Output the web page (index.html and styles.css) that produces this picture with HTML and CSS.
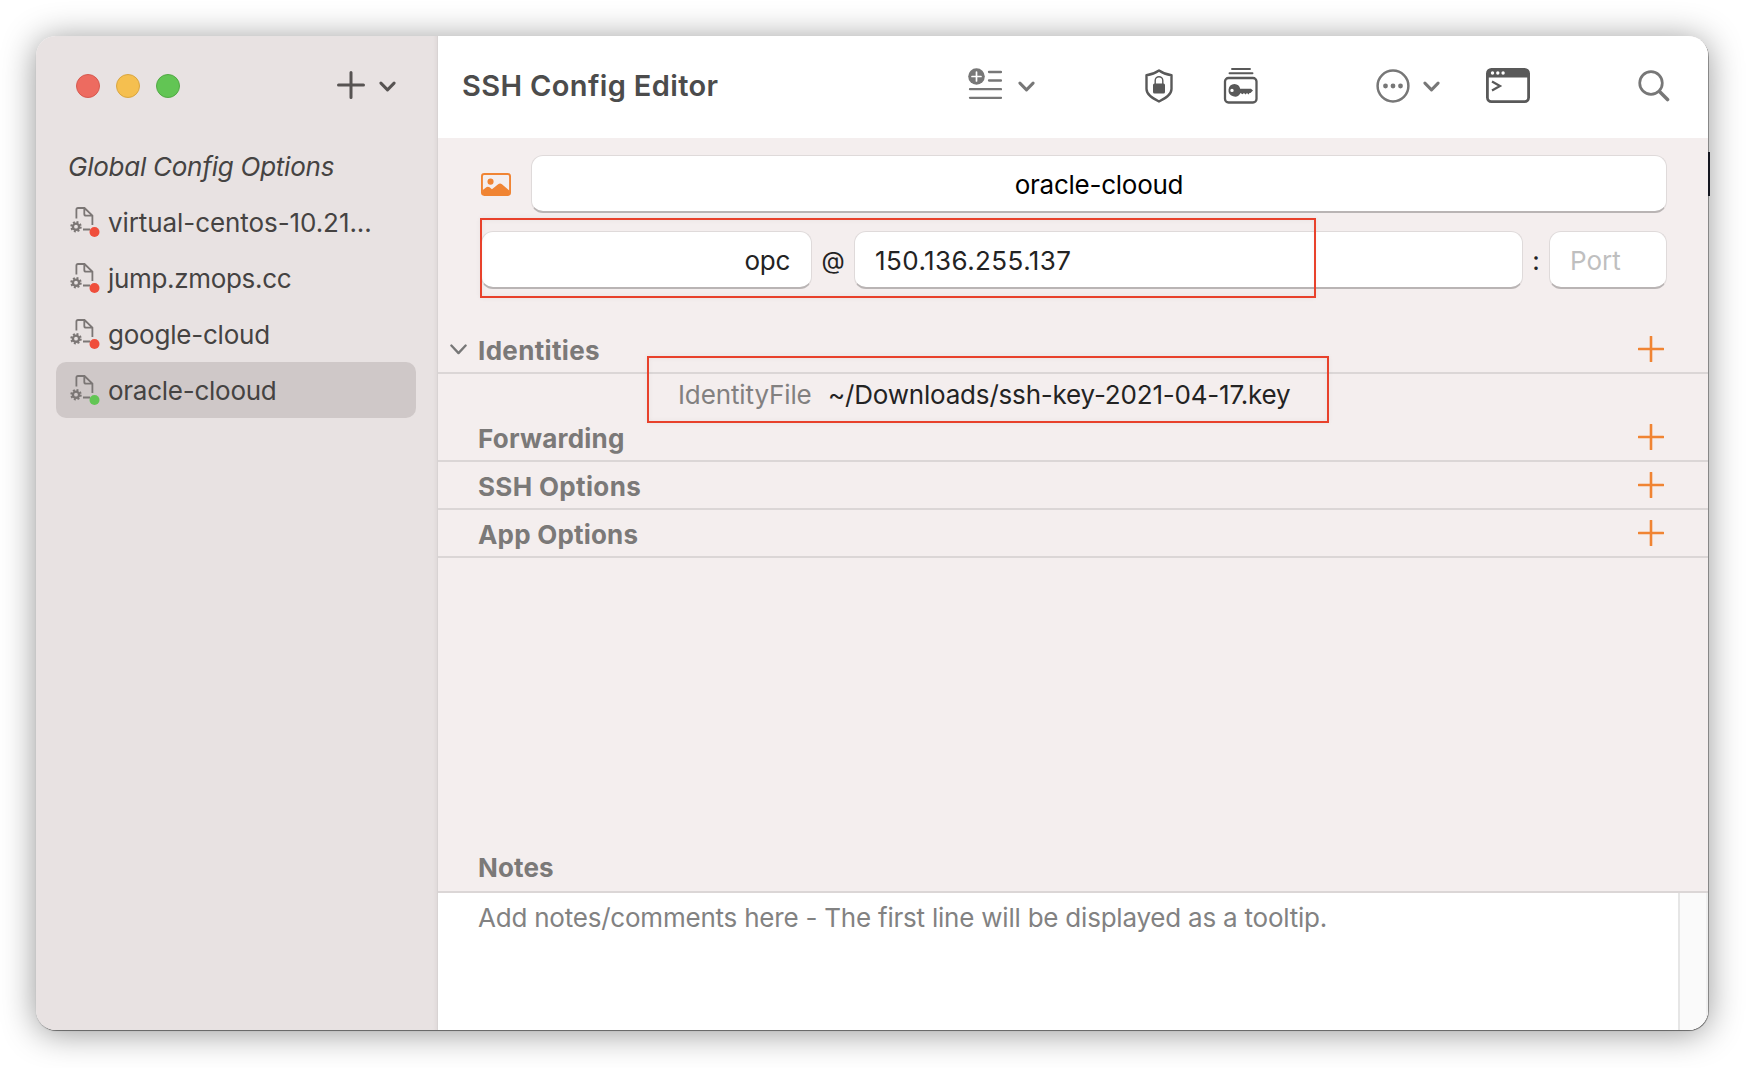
FILE: index.html
```html
<!DOCTYPE html>
<html lang="en">
<head>
<meta charset="utf-8">
<title>SSH Config Editor</title>
<link rel="stylesheet" href="styles.css">
</head>
<body>
<svg width="0" height="0" class="defs">
  <symbol id="host" viewBox="0 0 32 32">
    <g fill="none" stroke="#7b7675" stroke-width="1.800">
      <path d="M6.400 12.500V3.600Q6.400 2 8 2H14.500L22.400 9.700V19M14.300 2V8Q14.300 9.700 16 9.700H22.600M13 23.500H20"/>
      <circle cx="6" cy="20.700" r="3.100" stroke-width="2.400"/>
      <circle cx="6" cy="20.700" r="4.700" stroke-width="2" stroke-dasharray="1.950 1.741"/>
    </g>
    <circle cx="24.500" cy="26" r="5" fill="currentColor"/>
  </symbol>
  <symbol id="chev" viewBox="0 0 16 10"><path d="M1.800 1.800L8 8.200L14.200 1.800" fill="none" stroke="currentColor" stroke-width="2.800" stroke-linecap="round" stroke-linejoin="round"/></symbol>
  <symbol id="chev-thin" viewBox="0 0 16 10"><path d="M1.300 1.300L8 8.400L14.700 1.300" fill="none" stroke="currentColor" stroke-width="2.200" stroke-linecap="round" stroke-linejoin="round"/></symbol>
  <symbol id="plus" viewBox="0 0 26 26"><path d="M13 .8V25.200M.8 13H25.200" fill="none" stroke="#f08433" stroke-width="2.600" stroke-linecap="round"/></symbol>
</svg>
<div class="behind"></div>
<div class="window">
  <aside class="sidebar">
    <div class="sidebar-top">
      <span class="light red"></span><span class="light yellow"></span><span class="light green"></span>
      <svg class="add" viewBox="0 0 28 28"><path d="M14 1.500V26.500M1.500 14H26.500" fill="none" stroke="#575352" stroke-width="3" stroke-linecap="round"/></svg>
      <svg class="chev"><use href="#chev"/></svg>
    </div>
    <nav class="hosts">
      <div class="global"><span class="t">Global Config Options</span></div>
      <div class="host"><svg class="off"><use href="#host"/></svg><span class="t h1">virtual-centos-10.21...</span></div>
      <div class="host"><svg class="off"><use href="#host"/></svg><span class="t h2">jump.zmops.cc</span></div>
      <div class="host"><svg class="off"><use href="#host"/></svg><span class="t h3">google-cloud</span></div>
      <div class="host active"><svg class="on"><use href="#host"/></svg><span class="t h4">oracle-clooud</span></div>
    </nav>
  </aside>
  <main class="main">
    <header class="toolbar">
      <h1>SSH Config Editor</h1>
      <svg class="tb-list" viewBox="0 0 34 32"><circle cx="8.500" cy="8.500" r="8.300" fill="#777"/><path d="M8.500 4V13M4 8.500H13" stroke="#fff" stroke-width="1.700" stroke-linecap="round"/><path d="M21 4H33M21 12.500H33M2 21.200H33M2 29.800H33" stroke="#777" stroke-width="2.300" stroke-linecap="round"/></svg>
      <svg class="chev grey"><use href="#chev"/></svg>
      <svg class="tb-shield" viewBox="0 0 28 34"><path d="M14 1.500C10.500 4 6.500 5.500 1.500 6.200V20C1.500 26 8 29.500 14 32.500C20 29.500 26.500 26 26.500 20V6.200C21.500 5.500 17.500 4 14 1.500Z" fill="none" stroke="#595959" stroke-width="2.400" stroke-linejoin="round"/><rect x="8" y="14.500" width="12" height="10" rx="1.500" fill="#595959"/><path d="M10.200 15V11.500A3.800 3.800 0 0 1 17.800 11.500V15" fill="none" stroke="#595959" stroke-width="1.400"/></svg>
      <svg class="tb-keys" viewBox="0 0 36 36"><g fill="none" stroke="#595959"><rect x="2" y="10" width="31.500" height="24.500" rx="3.500" stroke-width="2.300"/><path d="M9 1H27M6.500 5.200H29.500" stroke-width="1.900" stroke-linecap="round"/></g><path fill-rule="evenodd" d="M11.500 16A6.300 6.300 0 0 1 17.200 20.800H28L30 22.600L27.500 25H26.500L25.500 26.500L24 25L22.500 26.500L21 25L19.500 26.300L17.500 25A6.300 6.300 0 1 1 11.500 16ZM9 20.700A1.700 1.700 0 1 0 9 24.100A1.700 1.700 0 1 0 9 20.700Z" fill="#595959"/></svg>
      <svg class="tb-more" viewBox="0 0 34 34"><circle cx="17" cy="17" r="15.400" fill="none" stroke="#777" stroke-width="2.500"/><g fill="#777"><circle cx="9.500" cy="17" r="2.400"/><circle cx="17" cy="17" r="2.400"/><circle cx="24.500" cy="17" r="2.400"/></g></svg>
      <svg class="chev grey"><use href="#chev"/></svg>
      <svg class="tb-term" viewBox="0 0 44 35"><rect x="1.400" y="1.400" width="41.200" height="32.200" rx="4" fill="none" stroke="#595959" stroke-width="2.800"/><path d="M1 9.500V5Q1 1 5 1H39Q43 1 43 5V9.500Z" fill="#595959"/><g fill="#fff"><circle cx="6.500" cy="5" r="1.700"/><circle cx="11.800" cy="5" r="1.700"/><circle cx="17.100" cy="5" r="1.700"/></g><path d="M6 13.500L14 18L6 22.500" fill="none" stroke="#595959" stroke-width="2.200"/></svg>
      <svg class="tb-search" viewBox="0 0 32 32"><circle cx="13" cy="13" r="11.300" fill="none" stroke="#777" stroke-width="2.700"/><path d="M21.500 21.500L29.500 29.500" stroke="#777" stroke-width="3.600" stroke-linecap="round"/></svg>
    </header>
    <div class="form">
      <div class="row">
        <svg class="pic" viewBox="0 0 31.500 24"><rect x="1" y="1" width="29.500" height="22" rx="2.500" fill="none" stroke="#f08433" stroke-width="2"/><circle cx="10" cy="9" r="3.200" fill="#f08433"/><path d="M1.500 18L6 14.700Q7.500 13.800 9 15L11.500 17L18 11.700Q20 10.200 22 11.700L30 18.500V22.500H1.500Z" fill="#f08433"/></svg>
        <div class="field name"><span class="t n">oracle-clooud</span></div>
      </div>
      <div class="row second">
        <div class="field user"><span class="t u">opc</span></div>
        <span class="at">@</span>
        <div class="field ip"><span class="t i">150.136.255.137</span></div>
        <span class="colon">:</span>
        <div class="field port"><span class="t p">Port</span></div>
      </div>
    </div>
    <section class="section first"><svg class="open"><use href="#chev-thin"/></svg><h2><span class="t s1">Identities</span></h2><svg class="plus"><use href="#plus"/></svg></section>
    <div class="identity"><span class="key"><span class="t k">IdentityFile</span></span><span class="t v">~/Downloads/ssh-key-2021-04-17.key</span></div>
    <section class="section"><h2><span class="t s2">Forwarding</span></h2><svg class="plus"><use href="#plus"/></svg></section>
    <section class="section"><h2><span class="t s3">SSH Options</span></h2><svg class="plus"><use href="#plus"/></svg></section>
    <section class="section"><h2><span class="t s4">App Options</span></h2><svg class="plus"><use href="#plus"/></svg></section>
    <section class="section notes-head"><h2><span class="t s5">Notes</span></h2></section>
    <div class="notes"><p><span class="t a">Add notes/comments here - The first line will be displayed as a tooltip.</span></p><div class="scroll"></div></div>
  </main>
</div>
<div class="mark mark-host"></div>
<div class="mark mark-key"></div>
</body>
</html>
```
FILE: styles.css
```css
* { box-sizing: border-box; }
body { margin: 0; width: 1746px; height: 1068px; padding: 36px; background: #fff; overflow: hidden; position: relative; font-family: Inter, "Liberation Sans", sans-serif; font-size: 26px; color: #232323; }
h1, h2, p { margin: 0; }
svg { flex: none; display: block; }
.defs { position: absolute; }
.t { white-space: nowrap; }
/* sliver of the window behind, showing past the right edge */
.behind { position: absolute; left: 1708px; top: 152px; width: 2px; height: 44px; background: #14161f; z-index: 1; }
.window { width: 1672px; height: 994px; display: flex; border-radius: 20px; overflow: hidden; box-shadow: 1px 1px 0 0 rgba(0,0,0,.32), 0 1px 1px 0 rgba(0,0,0,.22), 0 3px 34px rgba(0,0,0,.42); }
.sidebar { width: 402px; background: #e8e2e2; border-right: 1px solid #d8d3d3; box-shadow: inset -4px 0 3px -2px #e0dada; }
.sidebar-top { height: 102px; display: flex; align-items: center; padding: 0 0 2px 40px; }
.light { width: 24px; height: 24px; border-radius: 50%; margin-right: 16px; border: 1px solid; }
.red { background: #ed6b60; border-color: #d65a50; }
.yellow { background: #f5bf4f; border-color: #d9a641; }
.green { background: #62c554; border-color: #52a945; }
.add { width: 28px; height: 28px; margin: -3px 14px 0 141px; }
.chev { width: 17px; height: 11px; color: #575352; }
.grey { color: #777; }
.hosts { padding: 0 20px; color: #454342; }
.global { height: 56px; padding-left: 12px; line-height: 57px; font-style: italic; letter-spacing: -.25px; }
.host { height: 56px; padding-left: 13.5px; display: flex; align-items: center; gap: 6.5px; border-radius: 10px; line-height: 56px; }
.host svg { width: 32px; height: 32px; }
.host .t { padding-top: 2px; }
.h1 { letter-spacing: -.08px; }
.h2 { letter-spacing: -.32px; }
.h3 { letter-spacing: -.22px; }
.h4, .n { letter-spacing: -.26px; }
.off { color: #ef4e3b; }
.on { color: #62c554; }
.active { width: 360px; background: #cfc8c8; }
.main { flex: 1; min-width: 0; background: #f4eeee; display: flex; flex-direction: column; }
.toolbar { height: 102px; background: #fff; display: flex; align-items: center; padding-bottom: 2px; }
.toolbar h1 { width: 531px; padding: 0 0 1px 24px; font-size: 29px; font-weight: 600; letter-spacing: .36px; color: #4c4c4c; white-space: nowrap; }
.tb-list { width: 34px; height: 32px; margin: -5px 16px 0 -1px; }
.tb-shield { width: 28px; height: 34px; margin: -1px 0 0 110px; }
.tb-keys { width: 36px; height: 36px; margin-left: 50px; }
.tb-more { width: 34px; height: 34px; margin: -1px 13px 0 117px; }
.tb-term { width: 44px; height: 35px; margin: -1px 0 0 46px; }
.tb-search { width: 32px; height: 32px; margin: -1px 0 0 108px; }
.form { height: 190px; padding: 17px 41px 0 43px; }
.row { display: flex; align-items: center; height: 58px; }
.second { margin-top: 18px; }
.pic { width: 30px; height: 23px; margin: 0 20px 0 0; }
.field { height: 58px; border-radius: 12px; background: #fff; border: 1px solid #dfdada; border-bottom: 2px solid #b9b4b4; display: flex; align-items: center; padding: 2px 20px 0; }
.name { flex: 1; justify-content: center; color: #000; }
.user { width: 331px; justify-content: flex-end; padding-right: 21px; }
.u { letter-spacing: -.3px; }
.at { width: 42px; text-align: center; font-size: 24px; }
.ip { width: 669px; }
.i { letter-spacing: .42px; }
.colon { width: 26px; text-align: center; }
.port { flex: 1; color: #bfbfbf; }
.section { height: 48px; flex: none; border-bottom: 2px solid #dbd6d6; display: flex; align-items: center; padding: 0 44px 0 40px; }
.section h2 { flex: 1; padding-top: 2px; font-size: 26px; font-weight: 700; color: #7b7978; }
.first { height: 46px; padding-left: 12px; }
.section.first h2 { padding: 1px 0 0; }
.notes-head h2 { padding: 0 0 1px; }
.first .plus { margin-top: -3px; }
.open { width: 17px; height: 11px; margin: -1px 11px 0 0; color: #777; }
.plus { width: 26px; height: 26px; }
.s1, .s3 { letter-spacing: .34px; }
.s2 { letter-spacing: .22px; }
.s4 { letter-spacing: .2px; }
.s5 { letter-spacing: .15px; }
.identity { height: 40px; padding-top: 5px; display: flex; line-height: 32px; }
.key { width: 390px; padding-left: 240px; color: #828080; }
.k { letter-spacing: -.12px; }
.v { letter-spacing: -.19px; }
.notes-head { margin-top: auto; }
.notes { height: 137px; flex: none; background: #fff; display: flex; color: #828282; }
.notes p { flex: 1; padding-left: 40px; line-height: 50px; letter-spacing: -.22px; }
.scroll { width: 30px; background: #fafafa; border-left: 2px solid #e6e6e6; border-right: 2px solid #f0f0f0; }
.mark { position: absolute; border: 2px solid #e8412b; box-shadow: 0 0 5px rgba(0,0,0,.05), inset 0 0 5px rgba(0,0,0,.05); }
.mark-host { left: 480px; top: 218px; width: 836px; height: 80px; }
.mark-key { left: 647px; top: 356px; width: 682px; height: 67px; }
```
